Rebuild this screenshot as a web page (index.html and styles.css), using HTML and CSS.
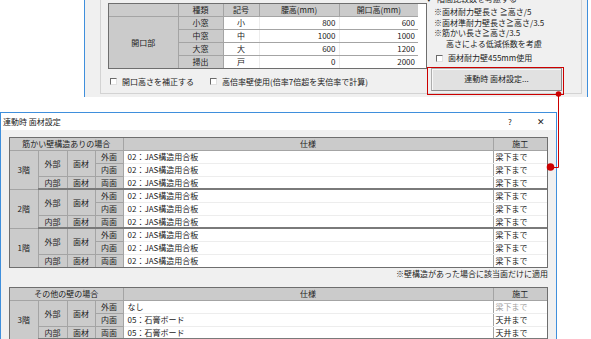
FILE: index.html
```html
<!DOCTYPE html>
<html lang="ja">
<head>
<meta charset="utf-8">
<link rel="stylesheet" href="styles.css">
</head>
<body>
<div class="topwin">
  <div class="group">
    <div class="grp-main">
      <div class="tblwrap">
        <table class="open">
          <colgroup><col class="c1"><col class="c2"><col class="c3"><col class="c4"><col class="c5"></colgroup>
          <tr class="hd"><th></th><th>種類</th><th>記号</th><th>腰高(mm)</th><th>開口高(mm)</th></tr>
          <tr><td class="g" rowspan="4">開口部</td><td class="g">小窓</td><td class="ctr">小</td><td class="num">800</td><td class="num">600</td></tr>
          <tr><td class="g">中窓</td><td class="ctr">中</td><td class="num">1000</td><td class="num">1000</td></tr>
          <tr><td class="g">大窓</td><td class="ctr">大</td><td class="num">600</td><td class="num">1200</td></tr>
          <tr><td class="g">掃出</td><td class="ctr">戸</td><td class="num">0</td><td class="num">2000</td></tr>
        </table>
      </div>
      <div class="checks">
        <span class="chk"><span class="box"></span>開口高さを補正する</span>
        <span class="chk second"><span class="box"></span>高倍率壁使用(倍率7倍超を実倍率で計算)</span>
      </div>
    </div>
    <div class="grp-side">
      <div class="opt-first"><span class="tick">✔</span>階間比較数を考慮する</div>
      <div class="notes">
        <div>※面材耐力壁長さ ≧高さ/5</div>
        <div>※面材準耐力壁長さ≧高さ/3.5</div>
        <div>※筋かい長さ≧高さ/3.5</div>
        <div class="indent">高さによる低減係数を考慮</div>
      </div>
      <div class="chk side-chk"><span class="box"></span>面材耐力壁455mm使用</div>
      <div class="btn">連動時 面材設定...</div>
    </div>
  </div>
</div>

<div class="dlg">
  <div class="dlg-title">
    <span class="ttl">連動時 面材設定</span>
    <span class="help">?</span>
    <span class="close">✕</span>
  </div>
  <div class="dlg-body">
    <div class="tblwrap">
      <table class="mat">
        <colgroup><col class="m1"><col class="m2"><col class="m3"><col class="m4"><col class="m5"><col class="m6"></colgroup>
        <tr class="hd"><th colspan="4">筋かい壁構造ありの場合</th><th>仕様</th><th>施工</th></tr>
        <tr><td class="g" rowspan="3">3階</td><td class="g" rowspan="2">外部</td><td class="g" rowspan="2">面材</td><td class="g">外面</td><td class="d">02：JAS構造用合板</td><td class="d w">梁下まで</td></tr>
        <tr><td class="g">内面</td><td class="d">02：JAS構造用合板</td><td class="d w">梁下まで</td></tr>
        <tr class="last"><td class="g">内部</td><td class="g">面材</td><td class="g">両面</td><td class="d">02：JAS構造用合板</td><td class="d w">梁下まで</td></tr>
        <tr><td class="g" rowspan="3">2階</td><td class="g" rowspan="2">外部</td><td class="g" rowspan="2">面材</td><td class="g">外面</td><td class="d">02：JAS構造用合板</td><td class="d w">梁下まで</td></tr>
        <tr><td class="g">内面</td><td class="d">02：JAS構造用合板</td><td class="d w">梁下まで</td></tr>
        <tr class="last"><td class="g">内部</td><td class="g">面材</td><td class="g">両面</td><td class="d">02：JAS構造用合板</td><td class="d w">梁下まで</td></tr>
        <tr><td class="g" rowspan="3">1階</td><td class="g" rowspan="2">外部</td><td class="g" rowspan="2">面材</td><td class="g">外面</td><td class="d">02：JAS構造用合板</td><td class="d w">梁下まで</td></tr>
        <tr><td class="g">内面</td><td class="d">02：JAS構造用合板</td><td class="d w">梁下まで</td></tr>
        <tr><td class="g">内部</td><td class="g">面材</td><td class="g">両面</td><td class="d">02：JAS構造用合板</td><td class="d w">梁下まで</td></tr>
      </table>
    </div>
    <div class="note">※壁構造があった場合に該当面だけに適用</div>
    <div class="tblwrap second-tbl">
      <table class="mat">
        <colgroup><col class="m1"><col class="m2"><col class="m3"><col class="m4"><col class="m5"><col class="m6"></colgroup>
        <tr class="hd"><th colspan="4">その他の壁の場合</th><th>仕様</th><th>施工</th></tr>
        <tr><td class="g" rowspan="3">3階</td><td class="g" rowspan="2">外部</td><td class="g" rowspan="2">面材</td><td class="g">外面</td><td class="d">なし</td><td class="d w dis">梁下まで</td></tr>
        <tr><td class="g">内面</td><td class="d">05：石膏ボード</td><td class="d w">天井まで</td></tr>
        <tr class="last"><td class="g">内部</td><td class="g">面材</td><td class="g">両面</td><td class="d">05：石膏ボード</td><td class="d w">天井まで</td></tr>
        <tr><td class="g" rowspan="3">2階</td><td class="g" rowspan="2">外部</td><td class="g" rowspan="2">面材</td><td class="g">外面</td><td class="d">なし</td><td class="d w dis">梁下まで</td></tr>
        <tr><td class="g">内面</td><td class="d">05：石膏ボード</td><td class="d w">天井まで</td></tr>
      </table>
    </div>
  </div>
</div>

<svg class="annot" width="591" height="339" viewBox="0 0 591 339">
  <rect x="427.5" y="67.5" width="136" height="27" fill="none" stroke="#cc0000" stroke-width="1"/>
  <path d="M558.5 94 V167.5 H550" fill="none" stroke="#cc0000" stroke-width="1"/>
  <circle cx="558.5" cy="94" r="2.8" fill="#cc0000"/>
  <circle cx="550.5" cy="167" r="3.8" fill="#cc0000"/>
</svg>
</body>
</html>
```

FILE: styles.css
```css
* { box-sizing: border-box; }
html, body { margin: 0; padding: 0; }
body {
  width: 591px;
  height: 339px;
  overflow: hidden;
  position: relative;
  background: #ffffff;
  font-family: "Noto Sans CJK JP", "Noto Sans", sans-serif;
  font-size: 8px;
  color: #222222;
}

/* ---------- top window ---------- */
.topwin {
  margin-left: 84px;
  width: 504px;
  height: 97px;
  border-left: 1px solid #3f8fdc;
  border-right: 1px solid #3f8fdc;
  background: #f0f0f0;
  padding: 0 5px 3px 15px;
}
.group {
  height: 94px;
  border: 1px solid #d3d3d3;
  border-top: none;
  display: flex;
}
.grp-main {
  width: 326px;
  padding: 3px 0 0 7px;
}
.tblwrap {
  border: 1px solid #6e6e6e;
  background: #ffffff;
}
.open {
  width: 309px;
  border-collapse: collapse;
  border-style: hidden;
  table-layout: fixed;
}
.open .c1 { width: 69px; }
.open .c2 { width: 45px; }
.open .c3 { width: 36px; }
.open .c4 { width: 80px; }
.open .c5 { width: 79px; }
.open th, .open td {
  border: 1px solid #a4a4a4;
  padding: 0 3px;
  height: 13px;
  line-height: 11px;
  font-weight: normal;
  white-space: nowrap;
}
.open tr.hd th { height: 12px; background: #cbcbcb; text-align: center; }
.open td.g { background: #cbcbcb; text-align: center; }
.open td.ctr { text-align: center; border-color: #a4a4a4 #ececec; }
.open td.num { text-align: right; border-color: #a4a4a4 #ececec; }

.checks {
  display: flex;
  align-items: center;
  margin-top: 7px;
  padding-left: 2px;
  line-height: 11px;
}
.chk { display: flex; align-items: center; white-space: nowrap; }
.chk.second { margin-left: 16px; }
.box {
  width: 7px;
  height: 7px;
  background: #ffffff;
  border-top: 1px solid #6a6a6a;
  border-left: 1px solid #6a6a6a;
  border-right: 1px solid #e0e0e0;
  border-bottom: 1px solid #e0e0e0;
  margin-right: 5px;
  flex: none;
}

.grp-side {
  flex: 1;
  display: flex;
  flex-direction: column;
  line-height: 10.5px;
}
.opt-first {
  height: 4px;
  overflow: hidden;
  display: flex;
  align-items: flex-end;
  white-space: nowrap;
}
.opt-first .tick { width: 10px; font-size: 7px; }
.notes { margin-top: 3px; padding-left: 7px; white-space: nowrap; }
.notes .indent { padding-left: 12px; }
.side-chk { margin-top: 3px; height: 12px; padding-left: 9px; }
.btn {
  margin: 4px 0 0 4px;
  width: 131px;
  height: 23px;
  background: #e1e1e1;
  border: 1px solid #adadad;
  border-bottom-color: #8c8c8c;
  border-right-color: #8c8c8c;
  box-shadow: inset 1px 1px 0 #f8f8f8;
  display: flex;
  align-items: center;
  justify-content: center;
}

/* ---------- dialog ---------- */
.dlg {
  margin-top: 15px;
  width: 557px;
  border: 1px solid #3f8fdc;
  border-bottom: none;
  background: #f0f0f0;
}
.dlg-title {
  height: 17px;
  background: #ffffff;
  display: flex;
  align-items: center;
  padding-left: 2px;
}
.ttl { flex: 1; }
.help { width: 20px; text-align: center; }
.close { width: 30px; text-align: center; margin-left: 6px; font-size: 9px; }
.dlg-body { padding: 7px 8px 0 8px; }
.mat {
  width: 537px;
  border-collapse: collapse;
  border-style: hidden;
  table-layout: fixed;
}
.mat .m1 { width: 28px; }
.mat .m2 { width: 29px; }
.mat .m3 { width: 28px; }
.mat .m4 { width: 28px; }
.mat .m5 { width: 370px; }
.mat .m6 { width: 54px; }
.mat th, .mat td {
  border: 1px solid #a4a4a4;
  padding: 0;
  height: 13px;
  line-height: 11px;
  font-weight: normal;
  white-space: nowrap;
}
.mat tr.hd th { height: 12px; background: #cbcbcb; text-align: center; }
.mat td.g { background: #cbcbcb; text-align: center; }
.mat td.d { padding-left: 4px; border-top-color: #ededed; border-bottom-color: #ededed; }
.mat td.w { padding-left: 2px; }
.mat td.dis { color: #a0a0a0; }
.mat tr.last td { border-bottom: 2px solid #7a7a7a; }
.note {
  text-align: right;
  line-height: 11px;
  height: 11px;
  white-space: nowrap;
}
.second-tbl { margin-top: 8px; }

/* ---------- annotation ---------- */
.annot {
  position: absolute;
  left: 0;
  top: 0;
  pointer-events: none;
}
```
